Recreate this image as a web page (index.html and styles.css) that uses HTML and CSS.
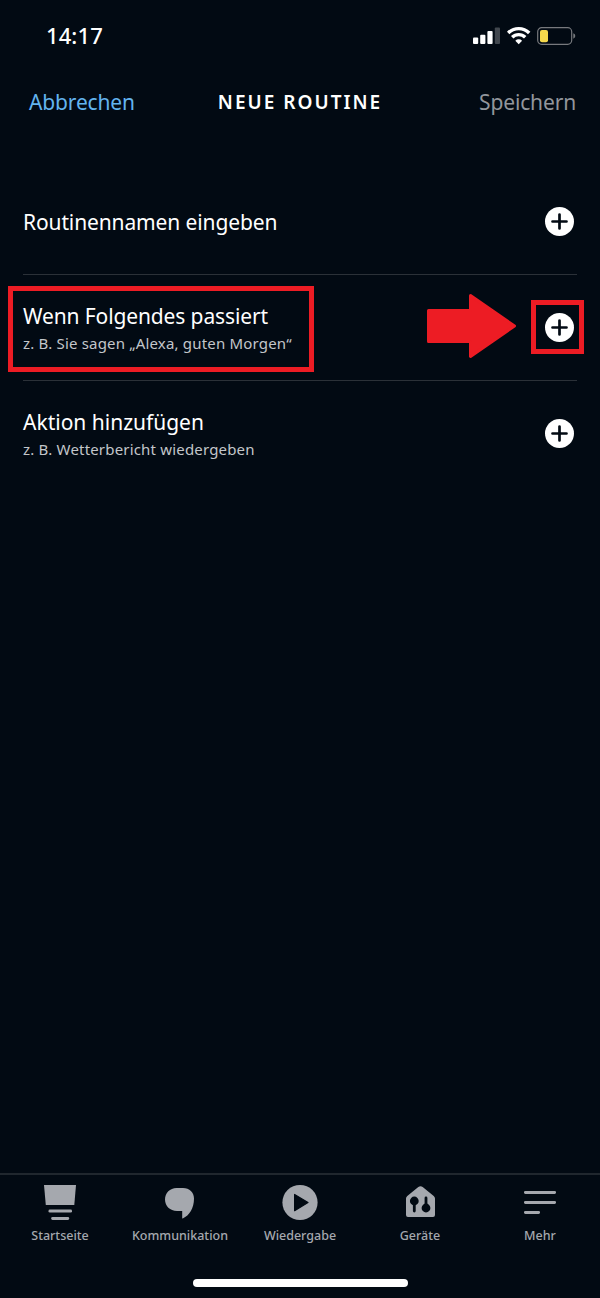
FILE: index.html
```html
<!DOCTYPE html>
<html lang="de">
<head>
<meta charset="utf-8">
<title>Neue Routine</title>
<link rel="stylesheet" href="styles.css">
</head>
<body>
<div class="screen">
  <div class="status">
    <span class="time">14:17</span>
    <svg class="status-icons" width="104" height="20" viewBox="0 0 104 20">
      <g fill="#fff">
        <rect x="1" y="11.500" width="5.200" height="6.500" rx="1"/>
        <rect x="8.200" y="8.800" width="5.200" height="9.200" rx="1"/>
        <rect x="15.400" y="5" width="5.200" height="13" rx="1"/>
        <rect x="22.800" y="1.500" width="5.200" height="16.500" rx="1" opacity=".25"/>
      </g>
      <g fill="none" stroke="#fff" stroke-width="3.400">
        <path d="M36.200 7a14.800 14.800 0 0 1 21 0"/>
        <path d="M40.200 11.300a9.200 9.200 0 0 1 13 0"/>
      </g>
      <path d="M43.300 14.700a4.900 4.900 0 0 1 6.800 0L46.700 18.200z" fill="#fff"/>
      <rect x="65.700" y="1.700" width="34" height="16.600" rx="4" fill="none" stroke="#77797d" stroke-width="1.200"/>
      <path d="M101.300 7.300q2 .8 2 2.700t-2 2.700z" fill="#77797d"/>
      <rect x="68" y="4" width="8" height="12.300" rx="2" fill="#f5d94c"/>
    </svg>
  </div>
  <header class="nav">
    <span class="cancel">Abbrechen</span>
    <h1 class="title">NEUE ROUTINE</h1>
    <span class="save">Speichern</span>
  </header>
  <main class="list">
    <div class="row">
      <div class="label"><div class="name tight">Routinennamen eingeben</div></div>
      <svg class="plus" width="29" height="29" viewBox="0 0 29 29"><circle cx="14.500" cy="14.500" r="14.500" fill="#fff"/><path d="M14.500 7.500v14M7.500 14.500h14" stroke="#020a13" stroke-width="2.700" stroke-linecap="round"/></svg>
    </div>
    <div class="row">
      <div class="label"><div class="name tight">Wenn Folgendes passiert</div><div class="hint">z. B. Sie sagen „Alexa, guten Morgen“</div></div>
      <svg class="plus" width="29" height="29" viewBox="0 0 29 29"><circle cx="14.500" cy="14.500" r="14.500" fill="#fff"/><path d="M14.500 7.500v14M7.500 14.500h14" stroke="#020a13" stroke-width="2.700" stroke-linecap="round"/></svg>
      <div class="mark mark-text"></div>
      <svg class="arrow" width="90" height="66" viewBox="0 0 90 66"><path d="M1.500 17.500h42V2.500L87.500 33 43.500 63.500V48.500H1.500z" fill="#ed1c24" stroke="#ed1c24" stroke-width="3" stroke-linejoin="round"/></svg>
      <div class="mark mark-plus"></div>
    </div>
    <div class="row">
      <div class="label"><div class="name">Aktion hinzufügen</div><div class="hint">z. B. Wetterbericht wiedergeben</div></div>
      <svg class="plus" width="29" height="29" viewBox="0 0 29 29"><circle cx="14.500" cy="14.500" r="14.500" fill="#fff"/><path d="M14.500 7.500v14M7.500 14.500h14" stroke="#020a13" stroke-width="2.700" stroke-linecap="round"/></svg>
    </div>
  </main>
  <footer class="tabs">
    <div class="tab">
      <svg width="40" height="40" viewBox="0 0 40 40" fill="#a5a8ae"><path d="M4 3h32l-1.700 20H5.800z"/><rect x="8.500" y="27.600" width="23.500" height="3" rx="1.300"/><rect x="11.200" y="34.900" width="18" height="3" rx="1.300"/></svg>
      <span>Startseite</span>
    </div>
    <div class="tab">
      <svg width="40" height="40" viewBox="0 0 40 40" fill="#a5a8ae"><path d="M16.500 6h6.500C29.500 6 34 10.500 34 16.500 34 26 29.500 33.500 22.800 36.400q-.6.200-.6-.4V29H17C10 29 5 24 5 17.500S10 6 16.500 6z"/></svg>
      <span>Kommunikation</span>
    </div>
    <div class="tab">
      <svg width="40" height="40" viewBox="0 0 40 40"><circle cx="20" cy="20.500" r="17.600" fill="#a5a8ae"/><path d="M14.600 12.500v16.200L28 20.500z" fill="#020a13" stroke="#020a13" stroke-width="1.200" stroke-linejoin="round"/></svg>
      <span>Wiedergabe</span>
    </div>
    <div class="tab">
      <svg width="40" height="40" viewBox="0 0 40 40"><path d="M18.300 5.100q2.200-1.700 4.400 0L33.700 14q1.300 1 1.300 2.600V33q0 2-2 2H8q-2 0-2-2V16.600Q6 15 7.300 14z" fill="#a5a8ae"/><g fill="#020a13" stroke="#020a13" stroke-width="2.800" stroke-linecap="round"><circle cx="14.300" cy="19" r="3"/><path d="M14.300 19v10"/><circle cx="26" cy="26" r="3"/><path d="M26 26V16"/></g></svg>
      <span>Geräte</span>
    </div>
    <div class="tab">
      <svg width="40" height="40" viewBox="0 0 40 40" fill="#a5a8ae"><rect x="4" y="8.900" width="32" height="3" rx="1.300"/><rect x="4" y="18.900" width="32" height="3" rx="1.300"/><rect x="4" y="28.900" width="16" height="3" rx="1.300"/></svg>
      <span>Mehr</span>
    </div>
  </footer>
  <div class="home"></div>
</div>
</body>
</html>
```
FILE: styles.css
```css
* { box-sizing: border-box; }
body { margin: 0; background: #020a13; }
.screen {
  width: 600px;
  height: 1298px;
  display: flex;
  flex-direction: column;
  background: #020a13;
  color: #fff;
  font-family: "Noto Sans", "Open Sans", sans-serif;
}
.status {
  height: 72px;
  display: flex;
  justify-content: space-between;
  align-items: center;
  padding: 0 24px 0 46px;
}
.time { font-size: 22px; font-weight: 500; line-height: 30px; letter-spacing: 0.1px; padding-bottom: 2px; }
.nav {
  height: 60px;
  display: grid;
  grid-template-columns: 160px 1fr 160px;
  align-items: center;
  padding: 0 24px 0 29px;
  font-size: 21px;
  line-height: 30px;
  letter-spacing: -0.15px;
}
.cancel { color: #63b4ef; }
.title { margin: 0 5px 0 0; font-size: 19px; font-weight: 600; letter-spacing: 2px; text-align: center; white-space: nowrap; }
.save { color: #92969c; text-align: right; }
.list { flex: 1; padding: 37px 23px 0 23px; }
.row {
  position: relative;
  height: 106px;
  display: flex;
  justify-content: space-between;
  align-items: center;
  padding-right: 3px;
  border-bottom: 1px solid #2b3138;
}
.row:last-child { border-bottom-color: transparent; }
.label { white-space: nowrap; }
.name { font-size: 21px; line-height: 30px; }
.tight { letter-spacing: -0.12px; }
.hint { font-size: 15px; line-height: 24px; letter-spacing: 0.18px; color: #c3c6ca; }
.mark { position: absolute; border: 5px solid #ed1c24; }
.mark-text { left: -15px; top: 11px; width: 306px; height: 86px; }
.mark-plus { left: 508px; top: 25px; width: 53px; height: 54px; }
.arrow { position: absolute; left: 404px; top: 18px; }
.tabs {
  height: 88px;
  display: grid;
  grid-template-columns: repeat(5, 120px);
  border-top: 2px solid #20272e;
  padding-top: 7px;
}
.tab {
  display: flex;
  flex-direction: column;
  align-items: center;
  color: #a5a8ae;
  font-size: 12.5px;
  font-weight: 500;
  line-height: 20px;
  gap: 4px;
}
.home {
  width: 215px;
  height: 8px;
  margin: 18px auto 11px;
  border-radius: 4px;
  background: #fff;
}
```
